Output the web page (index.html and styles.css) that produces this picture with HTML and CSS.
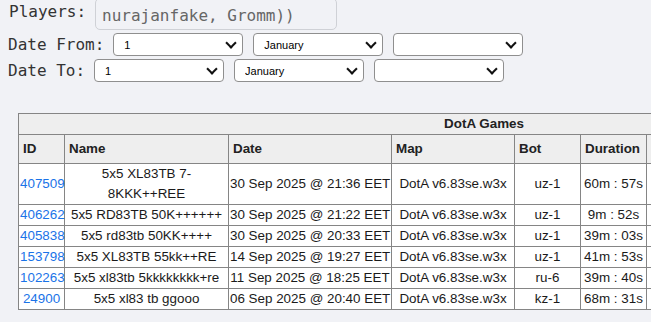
FILE: index.html
```html
<!DOCTYPE html>
<html lang="en">
<head>
  <meta charset="UTF-8" />
  <title>DotA Games</title>
  <link rel="stylesheet" href="styles.css">
</head>
<body>

<!-- Filters -->
<div class="filters">
  <div class="row players">
    <label for="players">Players:</label>
    <input type="text" id="players" value="nurajanfake, Gromm))" readonly />
  </div>

  <div class="row">
    <label>Date From:</label>
    <span class="pick"><select><option>1</option></select></span>
    <span class="pick"><select><option>January</option></select></span>
    <span class="pick"><select><option></option></select></span>
  </div>

  <div class="row">
    <label>Date To:</label>
    <span class="pick"><select><option>1</option></select></span>
    <span class="pick"><select><option>January</option></select></span>
    <span class="pick"><select><option></option></select></span>
  </div>
</div>

<!-- Games table (runs past the right edge of the window) -->
<div class="games">
  <table>
    <colgroup>
      <col style="width:46px">
      <col style="width:164px">
      <col style="width:163px">
      <col style="width:123px">
      <col style="width:66px">
      <col style="width:66px">
      <col style="width:303px">
    </colgroup>
    <thead>
      <tr><th colspan="7" class="title">DotA Games</th></tr>
      <tr>
        <th>ID</th>
        <th>Name</th>
        <th>Date</th>
        <th>Map</th>
        <th>Bot</th>
        <th>Duration</th>
        <th></th>
      </tr>
    </thead>
    <tbody>
      <tr>
        <td><a href="#">407509</a></td>
        <td class="name">5x5 XL83TB 7-8KKK++REE</td>
        <td>30 Sep 2025 @ 21:36 EET</td>
        <td>DotA v6.83se.w3x</td>
        <td>uz-1</td>
        <td>60m : 57s</td>
        <td></td>
      </tr>
      <tr>
        <td><a href="#">406262</a></td>
        <td class="name">5x5 RD83TB 50K++++++</td>
        <td>30 Sep 2025 @ 21:22 EET</td>
        <td>DotA v6.83se.w3x</td>
        <td>uz-1</td>
        <td>9m : 52s</td>
        <td></td>
      </tr>
      <tr>
        <td><a href="#">405838</a></td>
        <td class="name">5x5 rd83tb 50KK++++</td>
        <td>30 Sep 2025 @ 20:33 EET</td>
        <td>DotA v6.83se.w3x</td>
        <td>uz-1</td>
        <td>39m : 03s</td>
        <td></td>
      </tr>
      <tr>
        <td><a href="#">153798</a></td>
        <td class="name">5x5 XL83TB 55kk++RE</td>
        <td>14 Sep 2025 @ 19:27 EET</td>
        <td>DotA v6.83se.w3x</td>
        <td>uz-1</td>
        <td>41m : 53s</td>
        <td></td>
      </tr>
      <tr>
        <td><a href="#">102263</a></td>
        <td class="name">5x5 xl83tb 5kkkkkkkk+re</td>
        <td>11 Sep 2025 @ 18:25 EET</td>
        <td>DotA v6.83se.w3x</td>
        <td>ru-6</td>
        <td>39m : 40s</td>
        <td></td>
      </tr>
      <tr>
        <td><a href="#">24900</a></td>
        <td class="name">5x5 xl83 tb ggooo</td>
        <td>06 Sep 2025 @ 20:40 EET</td>
        <td>DotA v6.83se.w3x</td>
        <td>kz-1</td>
        <td>68m : 31s</td>
        <td></td>
      </tr>
    </tbody>
  </table>
</div>

</body>
</html>
```

FILE: styles.css
```css
* {
  box-sizing: border-box;
}
body {
  margin: 0;
  padding: 0 0 0 8px;
  background: #f1f2f6;
  color: #222;
  overflow: hidden;
}

.filters {
  font-family: 'DejaVu Sans Mono', monospace;
  font-size: 16px;
}
.row {
  display: flex;
  align-items: center;
  gap: 10px;
  height: 23px;
  margin-top: 3px;
}
.row label {
  color: #333;
  margin-right: -1px;
}
.players {
  align-items: flex-start;
  height: 32px;
  margin-top: -2px;
}
.players label {
  margin-top: 4px;
  margin-left: 1px;
}
.players input {
  width: 242px;
  height: 32px;
  padding: 7px 6px 5px;
  border: 1px solid #cfd1d6;
  border-radius: 5px;
  background: #f1f2f6;
  color: #666;
  font-family: 'DejaVu Sans Mono', monospace;
  font-size: 16px;
  line-height: 18px;
  outline: none;
}

.pick {
  position: relative;
  display: block;
  width: 130px;
  height: 23px;
}
.pick select {
  appearance: none;
  -webkit-appearance: none;
  width: 100%;
  height: 23px;
  padding: 0 0 0 10px;
  border: 1px solid #8f8f8f;
  border-radius: 4px;
  background: #fff;
  color: #000;
  font-family: 'Liberation Sans', Arial, sans-serif;
  font-size: 11px;
}
.pick::after {
  content: '';
  position: absolute;
  right: 8px;
  top: 6px;
  width: 6px;
  height: 6px;
  border-right: 2px solid #111;
  border-bottom: 2px solid #111;
  transform: rotate(45deg);
  pointer-events: none;
}

.games {
  margin: 31px 0 0 10px;
  overflow: hidden;
}
table {
  width: 931px;
  table-layout: fixed;
  border-collapse: collapse;
  border: 1px solid #858585;
  font-family: 'Liberation Sans', Arial, sans-serif;
  font-size: 13.4px;
  line-height: 20px;
  background: #fff;
}
th, td {
  border: 1px solid #858585;
}
th {
  background: #eee;
  color: #222;
  text-align: left;
  padding: 4px 4px;
  font-weight: bold;
}
th.title {
  text-align: center;
  padding: 0;
}
td {
  padding: 0 1px;
  text-align: center;
  color: #1a1a1a;
  white-space: nowrap;
}
td.name {
  padding: 0 2px;
  white-space: normal;
}
td a {
  color: #1a73e8;
  text-decoration: none;
}
```
